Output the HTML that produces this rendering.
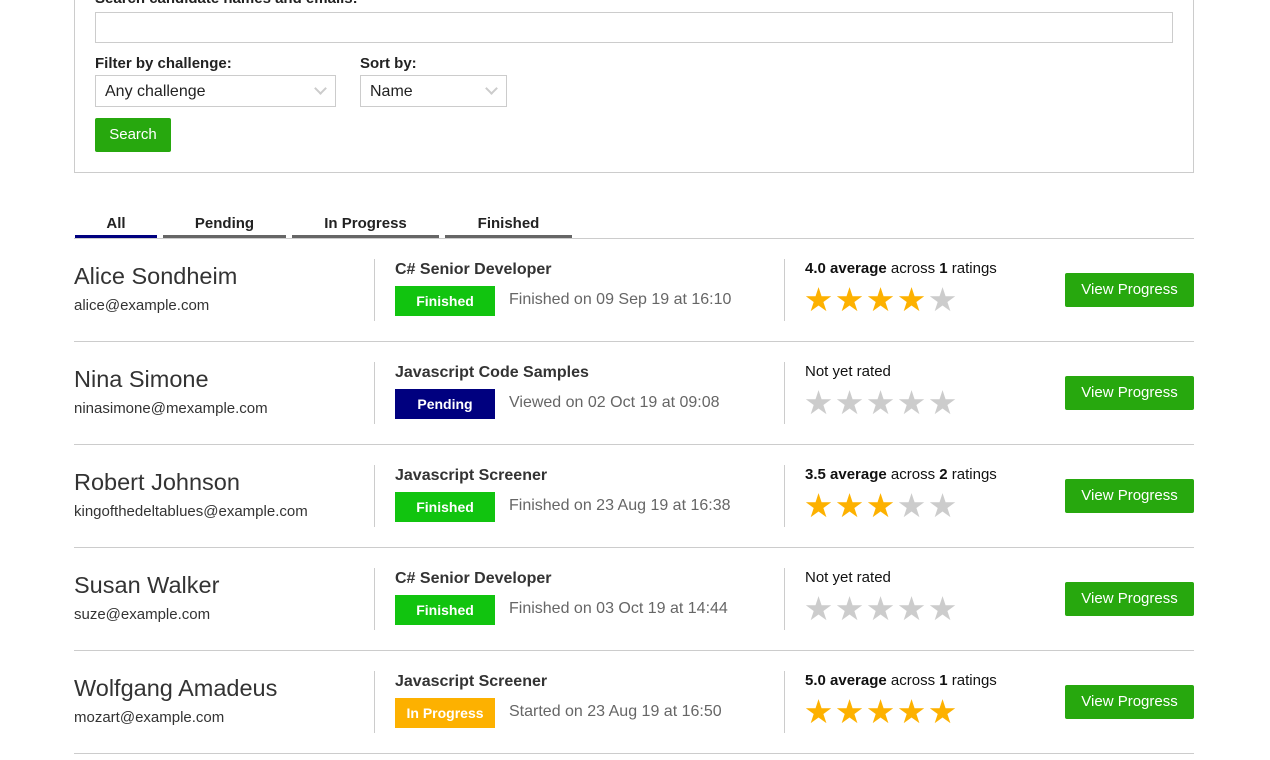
<!DOCTYPE html>
<html><head><style>
*{box-sizing:border-box;margin:0;padding:0}
body{width:1270px;height:760px;overflow:hidden;background:#fff;font-family:"Liberation Sans",sans-serif;color:#222;position:relative}
.a{position:absolute}
.box{left:74px;top:-40px;width:1120px;height:213px;border:1px solid #ccc}
.lbl{font-weight:bold;font-size:15px;color:#222}
.inp{border:1px solid #ccc;background:#fff}
.sel{border:1px solid #ccc;font-size:16px;padding:7px 9px 5px;color:#222}
.chev{position:absolute;right:10px;top:8px;width:9px;height:9px;border-right:2px solid #ccc;border-bottom:2px solid #ccc;transform:rotate(45deg)}
.btn{background:#27a80e;color:#fff;border-radius:2px;font-size:15px;text-align:center}
.tab{top:215px;font-weight:bold;font-size:15px;text-align:center;height:23px;border-bottom:3px solid #666}
.name{font-size:23.5px;color:#333}
.email{font-size:15px;color:#333}
.vl{width:1px;background:#ccc;height:62px}
.ch{font-weight:bold;font-size:16px;color:#333}
.badge{width:100px;height:30px;color:#fff;font-weight:bold;font-size:14px;text-align:center;line-height:30px}
.date{font-size:16px;color:#666}
.rt{font-size:15px;color:#111}
.stars{font-size:33px;line-height:30px;display:flex}
.stars span{width:31px;text-align:center;display:block}
.y{color:#fdb100}.g{color:#ccc}
.sep{left:74px;width:1120px;height:1px;background:#ccc}
</style></head><body>
<div class="a box"></div>
<div class="a lbl" style="left:95px;top:-10px">Search candidate names and emails:</div>
<div class="a inp" style="left:95px;top:12px;width:1078px;height:31px"></div>
<div class="a lbl" style="left:95px;top:55px">Filter by challenge:</div>
<div class="a lbl" style="left:360px;top:55px">Sort by:</div>
<div class="a sel" style="left:95px;top:75px;width:241px;height:32px">Any challenge<span class="chev"></span></div>
<div class="a sel" style="left:360px;top:75px;width:147px;height:32px">Name<span class="chev"></span></div>
<div class="a btn" style="left:95px;top:118px;width:76px;height:34px;line-height:34px">Search</div>

<div class="a tab" style="left:75px;width:82px;border-color:#00007f">All</div>
<div class="a tab" style="left:163px;width:123px">Pending</div>
<div class="a tab" style="left:292px;width:147px">In Progress</div>
<div class="a tab" style="left:445px;width:127px">Finished</div>
<div class="a sep" style="top:238px"></div>

<div class="a name" style="left:74px;top:263px">Alice Sondheim</div>
<div class="a email" style="left:74px;top:297px">alice@example.com</div>
<div class="a vl" style="left:374px;top:259px"></div>
<div class="a ch" style="left:395px;top:261px">C# Senior Developer</div>
<div class="a badge" style="left:395px;top:286px;background:#11c40f">Finished</div>
<div class="a date" style="left:509px;top:291px">Finished on 09 Sep 19 at 16:10</div>
<div class="a vl" style="left:784px;top:259px"></div>
<div class="a rt" style="left:805px;top:260px"><b>4.0 average</b> across <b>1</b> ratings</div>
<div class="a stars" style="left:803px;top:285px"><span class="y">★</span><span class="y">★</span><span class="y">★</span><span class="y">★</span><span class="g">★</span></div>
<div class="a btn" style="left:1065px;top:273px;width:129px;height:34px;line-height:34px">View Progress</div>
<div class="a sep" style="top:341px"></div>

<div class="a name" style="left:74px;top:366px">Nina Simone</div>
<div class="a email" style="left:74px;top:400px">ninasimone@mexample.com</div>
<div class="a vl" style="left:374px;top:362px"></div>
<div class="a ch" style="left:395px;top:364px">Javascript Code Samples</div>
<div class="a badge" style="left:395px;top:389px;background:#00007f">Pending</div>
<div class="a date" style="left:509px;top:394px">Viewed on 02 Oct 19 at 09:08</div>
<div class="a vl" style="left:784px;top:362px"></div>
<div class="a rt" style="left:805px;top:363px">Not yet rated</div>
<div class="a stars" style="left:803px;top:388px"><span class="g">★</span><span class="g">★</span><span class="g">★</span><span class="g">★</span><span class="g">★</span></div>
<div class="a btn" style="left:1065px;top:376px;width:129px;height:34px;line-height:34px">View Progress</div>
<div class="a sep" style="top:444px"></div>

<div class="a name" style="left:74px;top:469px">Robert Johnson</div>
<div class="a email" style="left:74px;top:503px">kingofthedeltablues@example.com</div>
<div class="a vl" style="left:374px;top:465px"></div>
<div class="a ch" style="left:395px;top:467px">Javascript Screener</div>
<div class="a badge" style="left:395px;top:492px;background:#11c40f">Finished</div>
<div class="a date" style="left:509px;top:497px">Finished on 23 Aug 19 at 16:38</div>
<div class="a vl" style="left:784px;top:465px"></div>
<div class="a rt" style="left:805px;top:466px"><b>3.5 average</b> across <b>2</b> ratings</div>
<div class="a stars" style="left:803px;top:491px"><span class="y">★</span><span class="y">★</span><span class="y">★</span><span class="g">★</span><span class="g">★</span></div>
<div class="a btn" style="left:1065px;top:479px;width:129px;height:34px;line-height:34px">View Progress</div>
<div class="a sep" style="top:547px"></div>

<div class="a name" style="left:74px;top:572px">Susan Walker</div>
<div class="a email" style="left:74px;top:606px">suze@example.com</div>
<div class="a vl" style="left:374px;top:568px"></div>
<div class="a ch" style="left:395px;top:570px">C# Senior Developer</div>
<div class="a badge" style="left:395px;top:595px;background:#11c40f">Finished</div>
<div class="a date" style="left:509px;top:600px">Finished on 03 Oct 19 at 14:44</div>
<div class="a vl" style="left:784px;top:568px"></div>
<div class="a rt" style="left:805px;top:569px">Not yet rated</div>
<div class="a stars" style="left:803px;top:594px"><span class="g">★</span><span class="g">★</span><span class="g">★</span><span class="g">★</span><span class="g">★</span></div>
<div class="a btn" style="left:1065px;top:582px;width:129px;height:34px;line-height:34px">View Progress</div>
<div class="a sep" style="top:650px"></div>

<div class="a name" style="left:74px;top:675px">Wolfgang Amadeus</div>
<div class="a email" style="left:74px;top:709px">mozart@example.com</div>
<div class="a vl" style="left:374px;top:671px"></div>
<div class="a ch" style="left:395px;top:673px">Javascript Screener</div>
<div class="a badge" style="left:395px;top:698px;background:#fdb100">In Progress</div>
<div class="a date" style="left:509px;top:703px">Started on 23 Aug 19 at 16:50</div>
<div class="a vl" style="left:784px;top:671px"></div>
<div class="a rt" style="left:805px;top:672px"><b>5.0 average</b> across <b>1</b> ratings</div>
<div class="a stars" style="left:803px;top:697px"><span class="y">★</span><span class="y">★</span><span class="y">★</span><span class="y">★</span><span class="y">★</span></div>
<div class="a btn" style="left:1065px;top:685px;width:129px;height:34px;line-height:34px">View Progress</div>
<div class="a sep" style="top:753px"></div>
</body></html>
